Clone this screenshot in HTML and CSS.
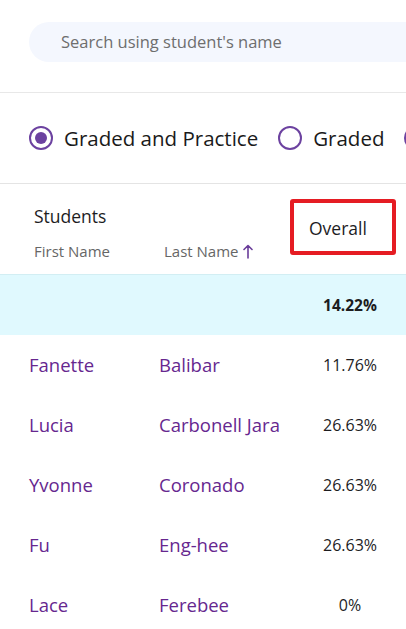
FILE: index.html
```html
<!DOCTYPE html>
<html>
<head>
<meta charset="utf-8">
<link rel="stylesheet" href="styles.css">
</head>
<body>
<div class="page">
  <div class="search-wrap">
    <div class="search">Search using student's name</div>
  </div>
  <div class="filters">
    <div class="radio-item"><span class="radio checked"></span><span class="radio-label">Graded and Practice</span></div>
    <div class="radio-item"><span class="radio"></span><span class="radio-label">Graded</span></div>
    <div class="radio-item"><span class="radio"></span><span class="radio-label">Practice</span></div>
  </div>
  <div class="thead">
    <div class="th-students">
      <div class="th-title">Students</div>
      <div class="th-sub">
        <span class="th-first">First Name</span>
        <span class="th-last">Last Name <svg class="arrow" width="10" height="15" viewBox="0 0 10 15"><path d="M5 14V1.5M1 5.5L5 1.5L9 5.5" fill="none" stroke="#6a3d9a" stroke-width="1.6" stroke-linecap="round" stroke-linejoin="round"/></svg></span>
      </div>
    </div>
    <div class="th-overall">Overall</div>
    <div class="highlight"></div>
  </div>
  <div class="row summary">
    <div class="c-first"></div>
    <div class="c-last"></div>
    <div class="c-pct bold">14.22%</div>
  </div>
  <div class="row">
    <div class="c-first">Fanette</div>
    <div class="c-last">Balibar</div>
    <div class="c-pct">11.76%</div>
  </div>
  <div class="row">
    <div class="c-first">Lucia</div>
    <div class="c-last">Carbonell Jara</div>
    <div class="c-pct">26.63%</div>
  </div>
  <div class="row">
    <div class="c-first">Yvonne</div>
    <div class="c-last">Coronado</div>
    <div class="c-pct">26.63%</div>
  </div>
  <div class="row">
    <div class="c-first">Fu</div>
    <div class="c-last">Eng-hee</div>
    <div class="c-pct">26.63%</div>
  </div>
  <div class="row">
    <div class="c-first">Lace</div>
    <div class="c-last">Ferebee</div>
    <div class="c-pct">0%</div>
  </div>
</div>
</body>
</html>
```

FILE: styles.css
```css
html, body {
  margin: 0;
  padding: 0;
  background: #ffffff;
}
body {
  font-family: "Open Sans", "Noto Sans", sans-serif;
  color: #1d1d1f;
  overflow: hidden;
}
.page {
  width: 406px;
  height: 629px;
  overflow: hidden;
}
.search-wrap {
  padding: 22px 0 30px 29px;
  border-bottom: 1px solid #e8e8e8;
}
.search {
  height: 40px;
  line-height: 40px;
  background: #f4f7fe;
  border-radius: 20px 0 0 20px;
  padding-left: 32px;
  font-size: 16.5px;
  color: #6e6e6e;
  white-space: nowrap;
}
.filters {
  height: 90px;
  display: flex;
  align-items: center;
  padding-left: 29px;
  gap: 20px;
  white-space: nowrap;
  border-bottom: 1px solid #e4e4e4;
  overflow: hidden;
}
.radio-item {
  display: flex;
  align-items: center;
  gap: 11px;
  flex-shrink: 0;
}
.radio {
  width: 20px;
  height: 20px;
  border: 2px solid #6c42a0;
  border-radius: 50%;
  display: flex;
  align-items: center;
  justify-content: center;
  box-sizing: content-box;
}
.radio.checked::after {
  content: "";
  width: 12px;
  height: 12px;
  border-radius: 50%;
  background: #6c42a0;
}
.radio-label {
  font-size: 20.5px;
  line-height: 26px;
  color: #1a1a1a;
}
.thead {
  position: relative;
  height: 90px;
  display: flex;
  border-bottom: 1px solid #d2eef3;
}
.th-students {
  width: 265px;
  padding-left: 34px;
  box-sizing: border-box;
}
.th-title {
  font-size: 17.5px;
  margin-top: 21px;
  height: 22px;
  line-height: 22px;
  color: #1d1d1f;
}
.th-sub {
  display: flex;
  margin-top: 14px;
  font-size: 15px;
  color: #666666;
  line-height: 20px;
}
.th-first {
  width: 130px;
}
.th-last {
  display: flex;
  align-items: center;
  gap: 4px;
}
.arrow {
  display: block;
}
.th-overall {
  padding-left: 44px;
  font-size: 17.5px;
  line-height: 22px;
  margin-top: 33px;
  color: #1d1d1f;
}
.highlight {
  position: absolute;
  left: 290px;
  top: 15px;
  width: 106px;
  height: 56px;
  box-sizing: border-box;
  border: 4px solid #e51c23;
  border-radius: 3px;
}
.row {
  height: 60px;
  display: flex;
  align-items: center;
  font-size: 18.5px;
  line-height: 22px;
}
.summary {
  background: #e0f9fe;
}
.c-first {
  flex: 0 0 159px;
  box-sizing: border-box;
  padding-left: 29px;
  color: #66278f;
  margin-top: -1px;
}
.c-last {
  flex: 0 0 135px;
  color: #66278f;
  white-space: nowrap;
  margin-top: -1px;
}
.c-pct {
  flex: 0 0 112px;
  text-align: center;
  color: #1d1d1f;
  font-size: 16px;
  margin-top: -1px;
}
.c-pct.bold {
  font-weight: 700;
  font-size: 15.5px;
}
```
